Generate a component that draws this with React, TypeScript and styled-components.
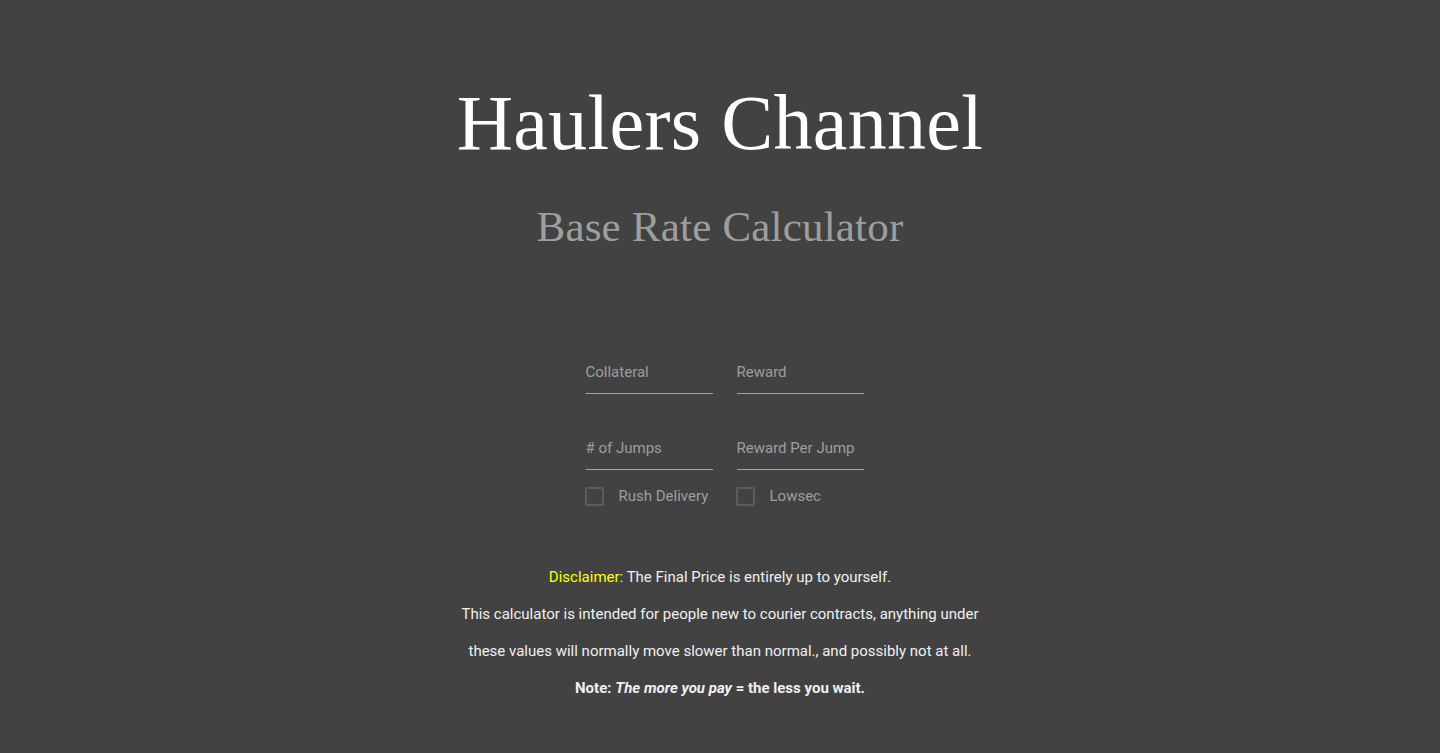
import React from "react";
import styled, { createGlobalStyle } from "styled-components";

const Global = createGlobalStyle`
  html, body { margin: 0; padding: 0; background: #424242; }
  body { font-family: Roboto, "Liberation Sans", sans-serif; }
`;

const Page = styled.div`
  min-height: 753px;
  display: flex;
  flex-direction: column;
  align-items: center;
  background: #424242;
`;

const Title = styled.h1`
  margin: 78px 0 0;
  font-family: "Liberation Serif", serif;
  font-weight: 400;
  font-size: 78px;
  line-height: 90px;
  color: #ffffff;
  letter-spacing: 0.3px;
`;

const Subtitle = styled.h2`
  margin: 34px 0 0;
  font-family: "Liberation Serif", serif;
  font-weight: 400;
  font-size: 43px;
  line-height: 50px;
  color: #9e9e9e;
  letter-spacing: 0.2px;
`;

const Form = styled.form`
  margin: 66px 0 0 9px;
  display: grid;
  grid-template-columns: 127px 127px;
  column-gap: 24px;
`;

const Field = styled.div`
  height: 76px;
  display: flex;
  flex-direction: column;
  justify-content: flex-end;
`;

const Input = styled.input`
  box-sizing: border-box;
  width: 100%;
  height: 44px;
  padding: 0;
  margin: 0;
  border: none;
  border-bottom: 1px solid #a5a5a5;
  background: transparent;
  outline: none;
  font-family: Roboto, sans-serif;
  font-size: 15px;
  color: #fff;
  &::placeholder { color: #9e9e9e; }
`;

const CheckRow = styled.label`
  display: flex;
  align-items: center;
  height: 30px;
  margin-top: 11px;
  font-family: Roboto, sans-serif;
  font-size: 15px;
  color: #9e9e9e;
  cursor: pointer;
`;

const Box = styled.span`
  box-sizing: border-box;
  width: 19px;
  height: 19px;
  border: 2px solid #5c5c5c;
  border-radius: 2px;
  margin-right: 15px;
  margin-left: -1px;
`;

const Notes = styled.div`
  margin-top: 48px;
  text-align: center;
  font-family: Roboto, sans-serif;
  font-size: 15px;
  color: #f0f0f0;
`;

const Line = styled.p<{ $bold?: boolean }>`
  margin: 0;
  line-height: 37px;
  font-weight: ${(p) => (p.$bold ? 700 : 400)};
`;

const Yellow = styled.span`
  color: #ffff00;
`;

export default function App() {
  return (
    <Page>
      <Global />
      <Title>Haulers Channel</Title>
      <Subtitle>Base Rate Calculator</Subtitle>
      <Form onSubmit={(e) => e.preventDefault()}>
        <Field><Input placeholder="Collateral" /></Field>
        <Field><Input placeholder="Reward" /></Field>
        <Field><Input placeholder="# of Jumps" /></Field>
        <Field><Input placeholder="Reward Per Jump" /></Field>
        <CheckRow><Box />Rush Delivery</CheckRow>
        <CheckRow><Box />Lowsec</CheckRow>
      </Form>
      <Notes>
        <Line><Yellow>Disclaimer:</Yellow> The Final Price is entirely up to yourself.</Line>
        <Line>This calculator is intended for people new to courier contracts, anything under</Line>
        <Line>these values will normally move slower than normal., and possibly not at all.</Line>
        <Line $bold>Note: <i>The more you pay</i> = the less you wait.</Line>
      </Notes>
    </Page>
  );
}
